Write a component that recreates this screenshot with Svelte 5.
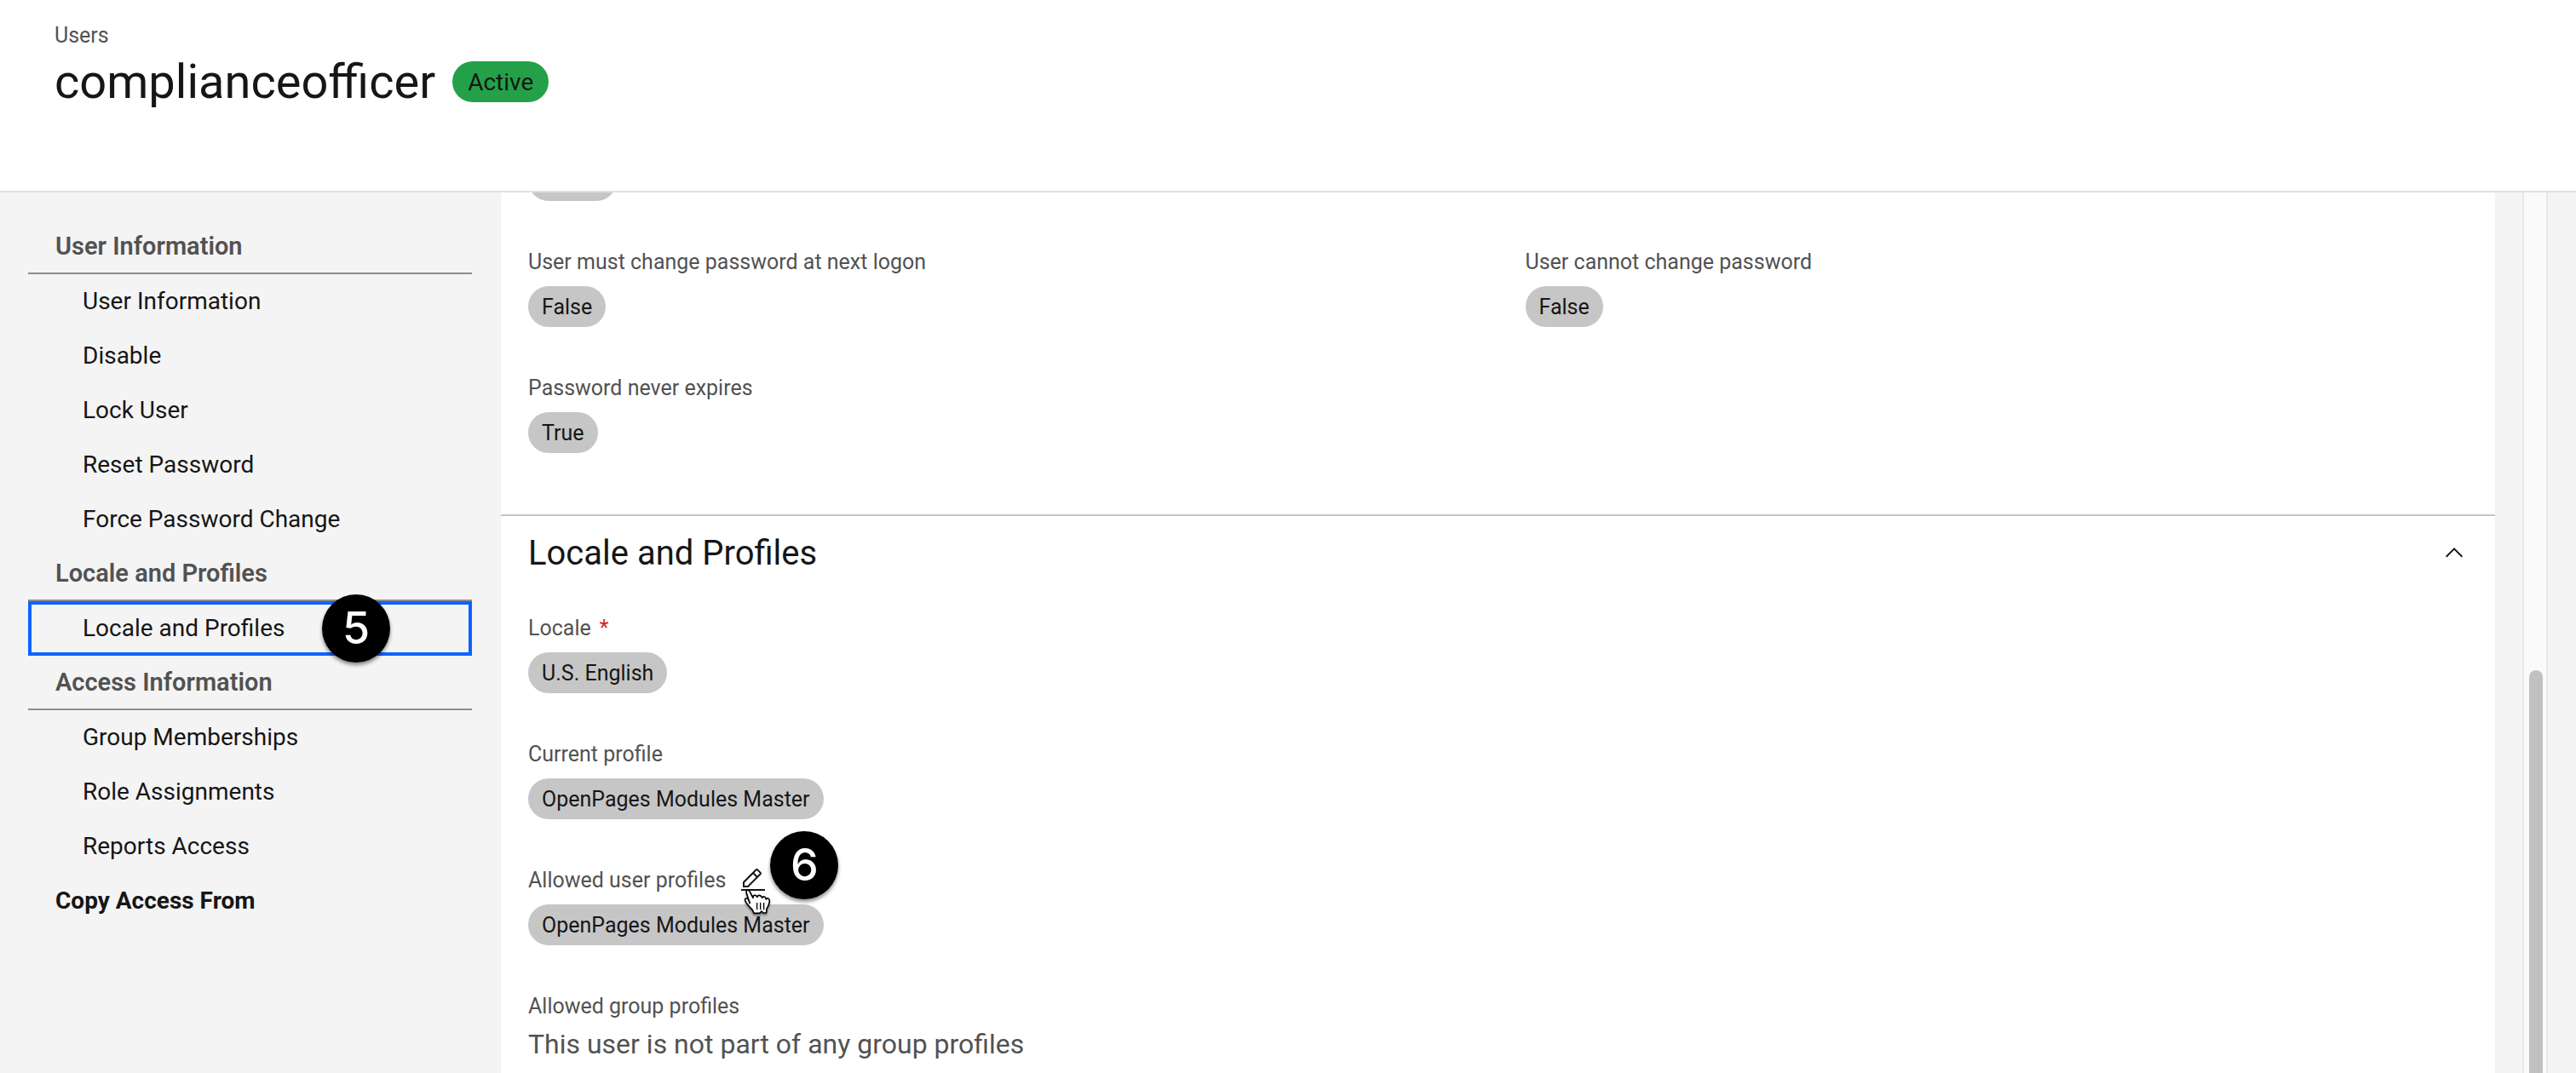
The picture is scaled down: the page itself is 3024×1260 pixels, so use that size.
<script>
  const groups = [
    { title: 'User Information', items: ['User Information', 'Disable', 'Lock User', 'Reset Password', 'Force Password Change'] },
    { title: 'Locale and Profiles', items: ['Locale and Profiles'] },
    { title: 'Access Information', items: ['Group Memberships', 'Role Assignments', 'Reports Access'] }
  ];

  let active = $state('Locale and Profiles');
  let open = $state(true);

  const slug = (name) => '#' + name.toLowerCase().replaceAll(' ', '-');
</script>

<div class="page">
  <header class="top">
    <a class="crumb" href="#users">Users</a>
    <div class="title-row">
      <h1>complianceofficer</h1>
      <span class="tag status">Active</span>
    </div>
  </header>

  <div class="body">
    <nav class="side" aria-label="Sections">
      {#each groups as group}
        <h2>{group.title}</h2>
        <ul>
          {#each group.items as item}
            <li>
              <a
                class="item"
                class:current={active === item}
                href={slug(item)}
                onclick={() => (active = item)}>{item}</a>
              {#if item === 'Locale and Profiles'}
                <span class="marker step-five">5</span>
              {/if}
            </li>
          {/each}
        </ul>
      {/each}
      <a class="copy" href="#copy-access-from">Copy Access From</a>
    </nav>

    <main>
      <section class="account">
        <div class="scrolled"><span class="tag"></span></div>
        <dl class="fields two">
          <div class="field">
            <dt>User must change password at next logon</dt>
            <dd><span class="tag">False</span></dd>
          </div>
          <div class="field">
            <dt>User cannot change password</dt>
            <dd><span class="tag">False</span></dd>
          </div>
          <div class="field">
            <dt>Password never expires</dt>
            <dd><span class="tag">True</span></dd>
          </div>
        </dl>
      </section>

      <section class="locale" id="locale-and-profiles">
        <h2>
          <button class="toggle" aria-expanded={open} onclick={() => (open = !open)}>
            Locale and Profiles
            <svg class:closed={!open} viewBox="0 0 16 16" aria-hidden="true">
              <path d="M8 5l5 5-.7.7L8 6.4l-4.3 4.3L3 10z" />
            </svg>
          </button>
        </h2>
        {#if open}
          <dl class="fields">
            <div class="field">
              <dt>Locale <span class="required">*</span></dt>
              <dd><span class="tag">U.S. English</span></dd>
            </div>
            <div class="field">
              <dt>Current profile</dt>
              <dd><span class="tag">OpenPages Modules Master</span></dd>
            </div>
            <div class="field">
              <dt class="editable">
                Allowed user profiles
                <span class="edit-wrap">
                  <button class="edit" aria-label="Edit allowed user profiles">
                    <svg viewBox="0 0 32 32" aria-hidden="true">
                      <path d="M2 26h28v2H2zM25.4 9c.8-.8.8-2 0-2.8l-3.6-3.6c-.8-.8-2-.8-2.8 0l-15 15V24h6.4zM20.4 4L24 7.6l-3 3L17.4 7zM6 22v-3.6l10-10 3.6 3.6-10 10z" />
                    </svg>
                  </button>
                  <svg class="pointer" viewBox="24 84 108 105" aria-hidden="true">
                    <path
                      d="M49 142L37 104C34 94 43 90 48 98L60 121C59 111 69 108 75 118C77 109 88 110 92 121C96 113 104 116 106 126C112 119 118 124 118 132C118 145 112 151 108 160L107 174H96L90 168L84 175H63L58 164C50 155 38 144 33 132C28 122 38 119 43 127L49 137"
                    />
                    <path class="crease" d="M74 138v25M86 138v25M98 138v25" />
                  </svg>
                  <span class="marker step-six">6</span>
                </span>
              </dt>
              <dd><span class="tag">OpenPages Modules Master</span></dd>
            </div>
            <div class="field">
              <dt>Allowed group profiles</dt>
              <dd class="plain">This user is not part of any group profiles</dd>
            </div>
          </dl>
        {/if}
      </section>
    </main>

    <div class="track" aria-hidden="true">
      <div class="thumb"></div>
    </div>
  </div>
</div>

<style>
  :global(body) {
    margin: 0;
    background: #f4f4f4;
  }

  .page {
    display: flex;
    flex-direction: column;
    height: 100vh;
    font-family: Roboto, "Liberation Sans", sans-serif;
    font-size: 28px;
    color: #161616;
  }

  h1, h2, ul, dl, dd {
    margin: 0;
    padding: 0;
    font-weight: 400;
  }

  a {
    color: inherit;
    text-decoration: none;
  }

  button {
    border: 0;
    padding: 0;
    background: none;
    color: inherit;
    font: inherit;
    cursor: pointer;
  }

  svg {
    display: block;
    width: 32px;
    height: 32px;
    fill: #161616;
  }

  .top {
    flex: none;
    padding: 26px 64px 90px;
    background: #fff;
    border-bottom: 2px solid #e0e0e0;
  }

  .crumb {
    display: block;
    width: fit-content;
    font-size: 25px;
    line-height: 32px;
    color: #525252;
  }

  .title-row {
    display: flex;
    align-items: center;
    gap: 20px;
  }

  h1 {
    font-size: 56px;
    line-height: 76px;
  }

  .tag {
    display: inline-flex;
    align-items: center;
    height: 48px;
    padding: 0 16px;
    border-radius: 24px;
    background: #c6c6c6;
    font-size: 25px;
    color: #161616;
  }

  .status {
    padding: 0 18px;
    background: #24a148;
    font-size: 28px;
  }

  .body {
    flex: 1;
    min-height: 0;
    display: flex;
    overflow: hidden;
  }

  .side {
    flex: none;
    box-sizing: border-box;
    width: 588px;
    padding: 32px 34px 0 33px;
  }

  .side h2, .copy {
    display: block;
    box-sizing: border-box;
    height: 64px;
    padding-left: 32px;
    line-height: 64px;
  }

  .side h2 {
    border-bottom: 2px solid #8d8d8d;
    font-size: 29px;
    font-weight: 600;
    line-height: 62px;
    color: #525252;
  }

  .copy {
    font-weight: 700;
  }

  ul {
    list-style: none;
  }

  li {
    position: relative;
  }

  .item {
    display: block;
    padding-left: 64px;
    line-height: 64px;
  }

  .current {
    outline: 4px solid #0f62fe;
    outline-offset: -4px;
  }

  .marker {
    position: absolute;
    display: flex;
    align-items: center;
    justify-content: center;
    width: 80px;
    height: 80px;
    border-radius: 50%;
    background: #000;
    box-shadow: 0 3px 4px rgba(0, 0, 0, 0.45);
    font-family: Inter, sans-serif;
    font-size: 52px;
    font-weight: 500;
    line-height: 80px;
    color: #fff;
  }

  .step-five {
    left: 345px;
    top: -8px;
  }

  .step-six {
    left: 36px;
    top: -42px;
  }

  main {
    flex: 1;
    min-width: 0;
    overflow: hidden;
    background: #fff;
  }

  .account {
    padding-bottom: 72px;
    border-bottom: 2px solid #c6c6c6;
  }

  .scrolled {
    display: flex;
    margin-top: -38px;
    padding: 0 0 56px 32px;
  }

  .scrolled .tag {
    width: 72px;
  }

  .fields {
    display: grid;
    row-gap: 56px;
  }

  .two {
    grid-template-columns: 1fr 1fr;
  }

  .field {
    display: flex;
    flex-direction: column;
    gap: 12px;
    padding-left: 32px;
  }

  dt {
    display: flex;
    gap: 10px;
    font-size: 25px;
    line-height: 32px;
    color: #525252;
  }

  .editable {
    gap: 16px;
  }

  dd {
    display: flex;
  }

  .required {
    color: #da1e28;
  }

  .plain {
    font-size: 32px;
    line-height: 32px;
    color: #525252;
  }

  .toggle {
    display: flex;
    align-items: center;
    justify-content: space-between;
    width: 100%;
    height: 86px;
    margin-bottom: 30px;
    padding: 0 32px;
    font-size: 40px;
  }

  .closed {
    transform: rotate(180deg);
  }

  .edit-wrap {
    position: relative;
  }

  .edit {
    display: block;
  }

  .pointer {
    position: absolute;
    left: 4px;
    top: 24px;
    width: 36px;
    height: 35px;
    fill: #fff;
    stroke: #000;
    stroke-width: 5px;
    stroke-linejoin: round;
    filter: drop-shadow(0 2px 1px rgba(0, 0, 0, 0.4));
    pointer-events: none;
  }

  .crease {
    stroke-width: 4px;
  }

  .track {
    flex: none;
    display: flex;
    flex-direction: column;
    justify-content: flex-end;
    box-sizing: border-box;
    width: 30px;
    margin: 0 33px 0 32px;
    padding: 0 4px 0 6px;
    border: solid #e8e8e8;
    border-width: 0 2px;
    background: #fafafa;
  }

  .thumb {
    height: 45.7%;
    border-radius: 8px 8px 0 0;
    background: #c1c1c1;
  }
</style>
